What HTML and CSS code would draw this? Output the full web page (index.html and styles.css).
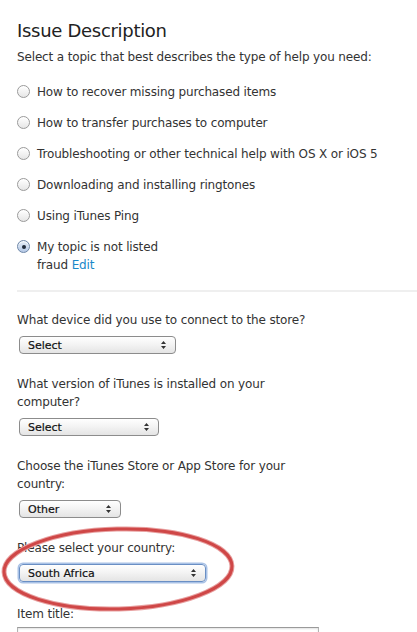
FILE: index.html
```html
<!DOCTYPE html>
<html lang="en">
<head>
<meta charset="utf-8">
<title>Issue Description</title>
<link rel="stylesheet" href="styles.css">
</head>
<body>
<main class="page">
  <h1 class="title">Issue Description</h1>
  <p class="intro">Select a topic that best describes the type of help you need:</p>
  <ul class="topics">
    <li class="topic"><span class="radio"></span><span class="topic-text">How to recover missing purchased items</span></li>
    <li class="topic"><span class="radio"></span><span class="topic-text">How to transfer purchases to computer</span></li>
    <li class="topic"><span class="radio"></span><span class="topic-text">Troubleshooting or other technical help with OS X or iOS 5</span></li>
    <li class="topic"><span class="radio"></span><span class="topic-text">Downloading and installing ringtones</span></li>
    <li class="topic"><span class="radio"></span><span class="topic-text">Using iTunes Ping</span></li>
    <li class="topic"><span class="radio radio-on"></span><span class="topic-text">My topic is not listed<br>fraud <a class="link" href="#">Edit</a></span></li>
  </ul>
  <div class="divider"></div>
  <div class="fields">
    <div class="field">
      <div class="label">What device did you use to connect to the store?</div>
      <div class="select sel-1"><span>Select</span><svg class="arrows" width="5" height="8" viewBox="0 0 5 8"><path d="M2.5 0 L5 3 L0 3 Z M0 5 L5 5 L2.5 8 Z" fill="#333"/></svg></div>
    </div>
    <div class="field">
      <div class="label">What version of iTunes is installed on your computer?</div>
      <div class="select sel-2"><span>Select</span><svg class="arrows" width="5" height="8" viewBox="0 0 5 8"><path d="M2.5 0 L5 3 L0 3 Z M0 5 L5 5 L2.5 8 Z" fill="#333"/></svg></div>
    </div>
    <div class="field">
      <div class="label">Choose the iTunes Store or App Store for your country:</div>
      <div class="select sel-3"><span>Other</span><svg class="arrows" width="5" height="8" viewBox="0 0 5 8"><path d="M2.5 0 L5 3 L0 3 Z M0 5 L5 5 L2.5 8 Z" fill="#333"/></svg></div>
    </div>
    <div class="field field-wide">
      <div class="label">Please select your country:</div>
      <div class="select sel-4 focused"><span>South Africa</span><svg class="arrows" width="5" height="8" viewBox="0 0 5 8"><path d="M2.5 0 L5 3 L0 3 Z M0 5 L5 5 L2.5 8 Z" fill="#333"/></svg></div>
    </div>
    <div class="field">
      <div class="label label-tight">Item title:</div>
      <div class="textbox"></div>
    </div>
  </div>
  <svg class="annotation" width="417" height="632" viewBox="0 0 417 632">
    <ellipse cx="118" cy="569" rx="114" ry="40" fill="none" stroke="#e8a0a0" stroke-width="5" transform="rotate(-1.5 118 569)"/>
    <ellipse cx="118" cy="569" rx="114" ry="40" fill="none" stroke="#cf4747" stroke-width="3" transform="rotate(-1.5 118 569)"/>
  </svg>
</main>
</body>
</html>
```
FILE: styles.css
```css
html, body {
  margin: 0;
  padding: 0;
  background: #fff;
}
body {
  font-family: "DejaVu Sans", "Liberation Sans", sans-serif;
  color: #333;
  font-size: 12px;
  letter-spacing: -0.15px;
}
.page {
  position: relative;
  width: 417px;
  height: 632px;
  overflow: hidden;
  padding-left: 17px;
  box-sizing: border-box;
}
.title {
  margin: 18px 0 0;
  font-size: 18px;
  line-height: 26px;
  font-weight: normal;
  letter-spacing: -0.3px;
  color: #222;
}
.intro {
  margin: 4px 0 0;
  line-height: 18px;
}
.topics {
  list-style: none;
  margin: 10.5px 0 0;
  padding: 0;
}
.topic {
  display: flex;
  align-items: flex-start;
  gap: 7px;
  padding: 6px 0 7px;
  line-height: 18px;
}
.radio {
  flex: none;
  width: 11px;
  height: 11px;
  margin-top: 2.5px;
  border-radius: 50%;
  border: 1px solid #9a9a9a;
  background: linear-gradient(#ffffff, #e6e6e6);
  box-shadow: inset 0 1px 1px rgba(255,255,255,0.9);
  position: relative;
}
.radio-on {
  border-color: #6d86a8;
  background: linear-gradient(#e3ecf7, #b5c9e6);
}
.radio-on::after {
  content: "";
  position: absolute;
  left: 3.5px;
  top: 3.5px;
  width: 4px;
  height: 4px;
  border-radius: 50%;
  background: #1f2a3a;
}
.link {
  color: #1a88c9;
  text-decoration: none;
}
.divider {
  height: 2px;
  background: #efefef;
  margin: 9.5px 0 0;
}
.fields {
  width: 302px;
  padding-top: 19px;
}
.field {
  margin-bottom: 21px;
}
.field-wide {
  margin-bottom: 23px;
}
.label {
  line-height: 18px;
  margin-bottom: 7px;
}
.label-tight {
  margin-bottom: 4px;
}
.select {
  display: flex;
  align-items: center;
  justify-content: space-between;
  box-sizing: border-box;
  height: 18px;
  margin-left: 2px;
  padding: 0 9px 0 8px;
  border: 1px solid #8c8c8c;
  border-radius: 4px;
  background: linear-gradient(#ffffff 0%, #f4f4f4 45%, #e4e4e4 100%);
  font-size: 11px;
  letter-spacing: 0;
  color: #111;
  -webkit-text-stroke: 0.2px #111;
}
.select .arrows {
  flex: none;
}
.sel-1 { width: 157px; }
.sel-2 { width: 140px; }
.sel-3 { width: 102px; }
.sel-4 { width: 187px; }
.focused {
  border-color: #6a8fc4;
  box-shadow: 0 0 0 1.5px #a9c2e6;
}
.textbox {
  height: 30px;
  border: 1px solid #b3b3b3;
  border-top-color: #9a9a9a;
  box-shadow: inset 0 1px 2px rgba(0,0,0,0.12);
  background: #fff;
}
.annotation {
  position: absolute;
  left: 0;
  top: 0;
  pointer-events: none;
}
```
